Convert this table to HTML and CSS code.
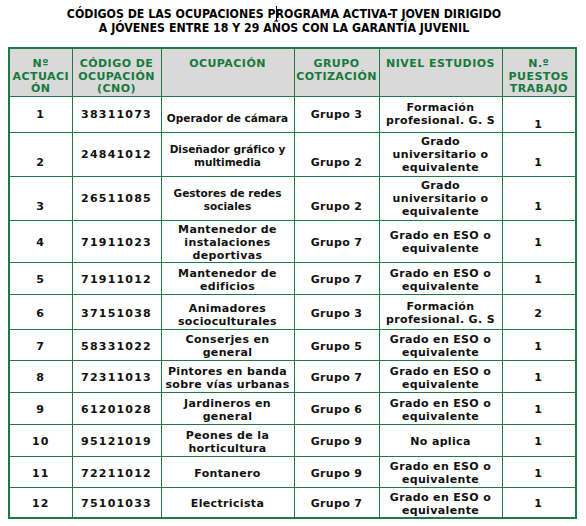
FILE: index.html
```html
<!DOCTYPE html>
<html lang="es">
<head>
<meta charset="utf-8">
<title>Códigos de las ocupaciones</title>
<link rel="stylesheet" href="styles.css">
</head>
<body>
<div class="page">
  <h1 class="title">CÓDIGOS DE LAS OCUPACIONES P<span class="caret"></span>ROGRAMA ACTIVA-T JOVEN DIRIGIDO<br>A JÓVENES ENTRE 18 Y 29 AÑOS CON LA GARANTÍA JUVENIL</h1>
  <table class="grid">
    <colgroup>
      <col class="c1"><col class="c2"><col class="c3"><col class="c4"><col class="c5"><col class="c6">
    </colgroup>
    <thead>
      <tr class="head">
        <th>Nº<br>ACTUACI<br>ÓN</th>
        <th>CÓDIGO DE<br>OCUPACIÓN<br>(CNO)</th>
        <th>OCUPACIÓN</th>
        <th>GRUPO<br>COTIZACIÓN</th>
        <th>NIVEL ESTUDIOS</th>
        <th>N.º<br>PUESTOS<br>TRABAJO</th>
      </tr>
    </thead>
    <tbody>
      <tr class="top r1">
        <td class="num">1</td>
        <td class="num">38311073</td>
        <td class="bot tight">Operador de cámara</td>
        <td>Grupo 3</td>
        <td>Formación<br>profesional. G. S</td>
        <td class="bot low num">1</td>
      </tr>
      <tr class="top r2">
        <td class="bot num">2</td>
        <td class="num">24841012</td>
        <td class="bot tight">Diseñador gráfico y<br>multimedia</td>
        <td class="bot">Grupo 2</td>
        <td>Grado<br>universitario o<br>equivalente</td>
        <td class="bot num">1</td>
      </tr>
      <tr class="top r3">
        <td class="bot num">3</td>
        <td class="num">26511085</td>
        <td class="bot tight">Gestores de redes<br>sociales</td>
        <td class="bot">Grupo 2</td>
        <td>Grado<br>universitario o<br>equivalente</td>
        <td class="bot num">1</td>
      </tr>
      <tr class="r4">
        <td class="num">4</td><td class="num">71911023</td><td>Mantenedor de<br>instalaciones<br>deportivas</td><td>Grupo 7</td><td>Grado en ESO o<br>equivalente</td><td class="num">1</td>
      </tr>
      <tr class="r5">
        <td class="num">5</td><td class="num">71911012</td><td>Mantenedor de<br>edificios</td><td>Grupo 7</td><td>Grado en ESO o<br>equivalente</td><td class="num">1</td>
      </tr>
      <tr class="r6">
        <td class="num">6</td><td class="num">37151038</td><td class="drop">Animadores<br>socioculturales</td><td>Grupo 3</td><td>Formación<br>profesional. G. S</td><td class="num">2</td>
      </tr>
      <tr class="r7">
        <td class="num">7</td><td class="num">58331022</td><td>Conserjes en<br>general</td><td>Grupo 5</td><td>Grado en ESO o<br>equivalente</td><td class="num">1</td>
      </tr>
      <tr class="r8">
        <td class="num">8</td><td class="num">72311013</td><td>Pintores en banda<br>sobre vías urbanas</td><td>Grupo 7</td><td>Grado en ESO o<br>equivalente</td><td class="num">1</td>
      </tr>
      <tr class="r9">
        <td class="num">9</td><td class="num">61201028</td><td>Jardineros en<br>general</td><td>Grupo 6</td><td>Grado en ESO o<br>equivalente</td><td class="num">1</td>
      </tr>
      <tr class="r10">
        <td class="num">10</td><td class="num">95121019</td><td>Peones de la<br>horticultura</td><td>Grupo 9</td><td>No aplica</td><td class="num">1</td>
      </tr>
      <tr class="r11">
        <td class="num">11</td><td class="num">72211012</td><td>Fontanero</td><td>Grupo 9</td><td>Grado en ESO o<br>equivalente</td><td class="num">1</td>
      </tr>
      <tr class="r12">
        <td class="num">12</td><td class="num">75101033</td><td>Electricista</td><td>Grupo 7</td><td>Grado en ESO o<br>equivalente</td><td class="num">1</td>
      </tr>
    </tbody>
  </table>
</div>
</body>
</html>
```
FILE: styles.css
```css
html, body {
  margin: 0;
  padding: 0;
  background: #ffffff;
}

.page {
  padding: 6px 0 0 8px;
  width: 570px;
}

.title {
  margin: 0 0 12px 0;
  padding-right: 18px;
  font-family: "DejaVu Sans Condensed", "DejaVu Sans", sans-serif;
  font-weight: bold;
  font-size: 12.25px;
  line-height: 14px;
  text-align: center;
  color: #000000;
}

.caret {
  display: inline-block;
  width: 1px;
  height: 15px;
  margin-right: -1px;
  background: #000000;
  vertical-align: -3px;
}

.grid {
  border-collapse: collapse;
  table-layout: fixed;
  width: 569px;
  border: 2px solid #1d7a45;
  font-family: "DejaVu Sans", Verdana, sans-serif;
  font-weight: bold;
  font-size: 11px;
  line-height: 13px;
  letter-spacing: 0.35px;
  color: #111111;
}

.c1 { width: 63px; }
.c2 { width: 89px; }
.c3 { width: 133px; }
.c4 { width: 85px; }
.c5 { width: 123px; }
.c6 { width: 74px; }

.grid th,
.grid td {
  border: 1px solid #1d7a45;
  text-align: center;
  padding: 3px 1px 0 1px;
  vertical-align: middle;
}

.grid th {
  background: #d9d9d9;
  color: #157a3c;
  vertical-align: top;
  padding-top: 9px;
  line-height: 12.5px;
  letter-spacing: 0.45px;
}

.head { height: 48px; }

.grid td.num { letter-spacing: 1.2px; }
.grid td.tight { font-size: 10.5px; letter-spacing: 0; }
.grid td.drop { padding-top: 7px; }

.grid .top td { padding: 0 1px; }
.grid .top td.bot { vertical-align: bottom; padding-bottom: 7px; }
.grid .top td.low { padding-bottom: 1px; }

.grid .r4 td { padding-top: 2px; }

.r1 { height: 36px; }
.r2 { height: 44px; }
.r3 { height: 44px; }
.r4 { height: 42px; }
.r5 { height: 32px; }
.r6 { height: 35px; }
.r7 { height: 31px; }
.r8 { height: 32px; }
.r9 { height: 32px; }
.r10 { height: 32px; }
.r11 { height: 31px; }
.r12 { height: 31px; }
```
